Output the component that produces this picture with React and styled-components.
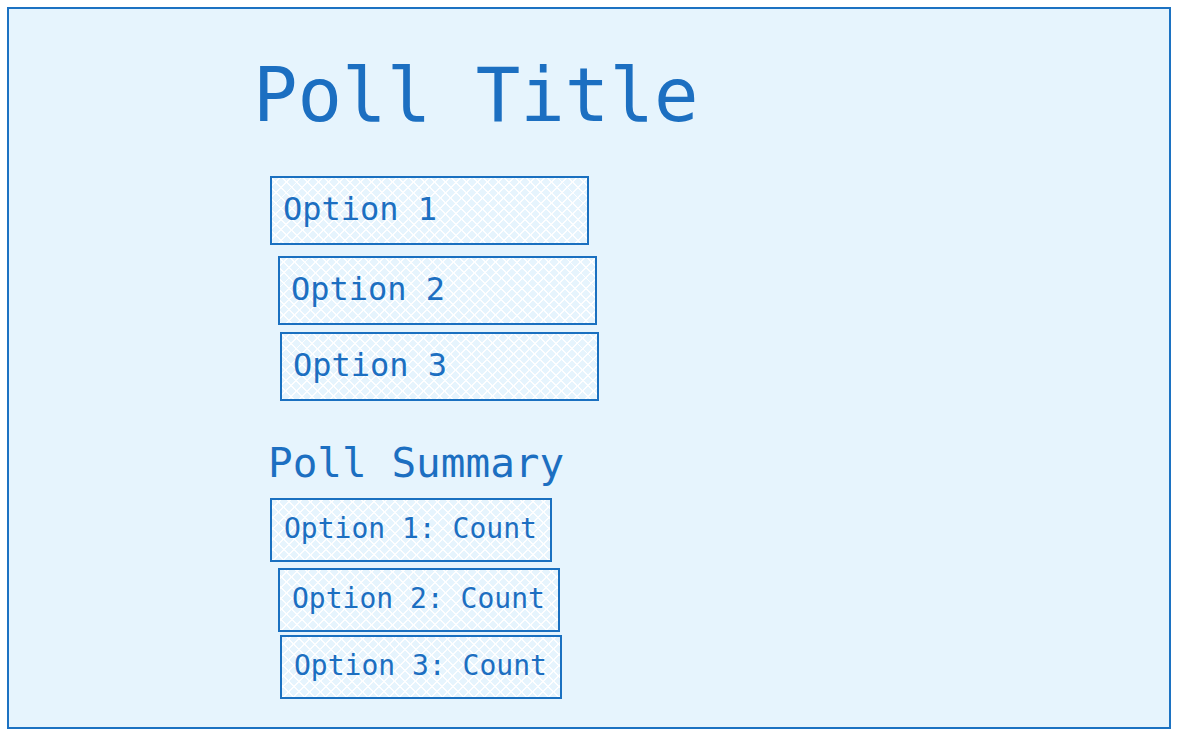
import React from "react";
import styled, { createGlobalStyle } from "styled-components";

const Global = createGlobalStyle`
  html, body { margin: 0; padding: 0; background: #ffffff; }
  body { font-family: "DejaVu Sans Mono", "Liberation Mono", monospace; }
`;

const Frame = styled.main`
  box-sizing: border-box;
  margin: 7px 0 0 7px;
  width: 1164px;
  height: 722px;
  border: 2px solid #1c72c2;
  background: #e6f4fd;
  padding: 49px 0 0 244px;
  color: #1c6fc1;
`;

const Title = styled.h1`
  margin: 0 0 44px 0;
  font-size: 74px;
  line-height: 1;
  font-weight: normal;
`;

const Hatch = styled.div`
  box-sizing: border-box;
  display: flex;
  align-items: center;
  padding-bottom: 3px;
  border: 2px solid #1a70c0;
  background-color: #e6f4fd;
  background-image:
    repeating-linear-gradient(45deg, rgba(255,255,255,0.95) 0 1.4px, transparent 1.4px 7.5px),
    repeating-linear-gradient(-45deg, rgba(255,255,255,0.95) 0 1.4px, transparent 1.4px 7.5px);
  margin-left: ${(p) => p.$dx}px;
  margin-top: ${(p) => p.$mt}px;
`;

const OptionBox = styled(Hatch)`
  width: 319px;
  height: 69px;
  padding-left: 11px;
  font-size: 32px;
`;

const SummaryTitle = styled.h2`
  margin: 38px 0 0 15px;
  font-size: 41px;
  line-height: 1.2;
  font-weight: normal;
`;

const CountBox = styled(Hatch)`
  width: 282px;
  height: 64px;
  padding-left: 12px;
  font-size: 28px;
`;

const List = styled.div`
  display: flex;
  flex-direction: column;
`;

const options = [
  { label: "Option 1", dx: 17, mt: 0 },
  { label: "Option 2", dx: 25, mt: 11 },
  { label: "Option 3", dx: 27, mt: 7 },
];

const counts = [
  { label: "Option 1: Count", dx: 17, mt: 10 },
  { label: "Option 2: Count", dx: 25, mt: 6 },
  { label: "Option 3: Count", dx: 27, mt: 3 },
];

export default function App() {
  return (
    <>
      <Global />
      <Frame>
        <Title>Poll Title</Title>
        <List>
          {options.map((o) => (
            <OptionBox key={o.label} $dx={o.dx} $mt={o.mt}>
              {o.label}
            </OptionBox>
          ))}
        </List>
        <SummaryTitle>Poll Summary</SummaryTitle>
        <List>
          {counts.map((o) => (
            <CountBox key={o.label} $dx={o.dx} $mt={o.mt}>
              {o.label}
            </CountBox>
          ))}
        </List>
      </Frame>
    </>
  );
}
